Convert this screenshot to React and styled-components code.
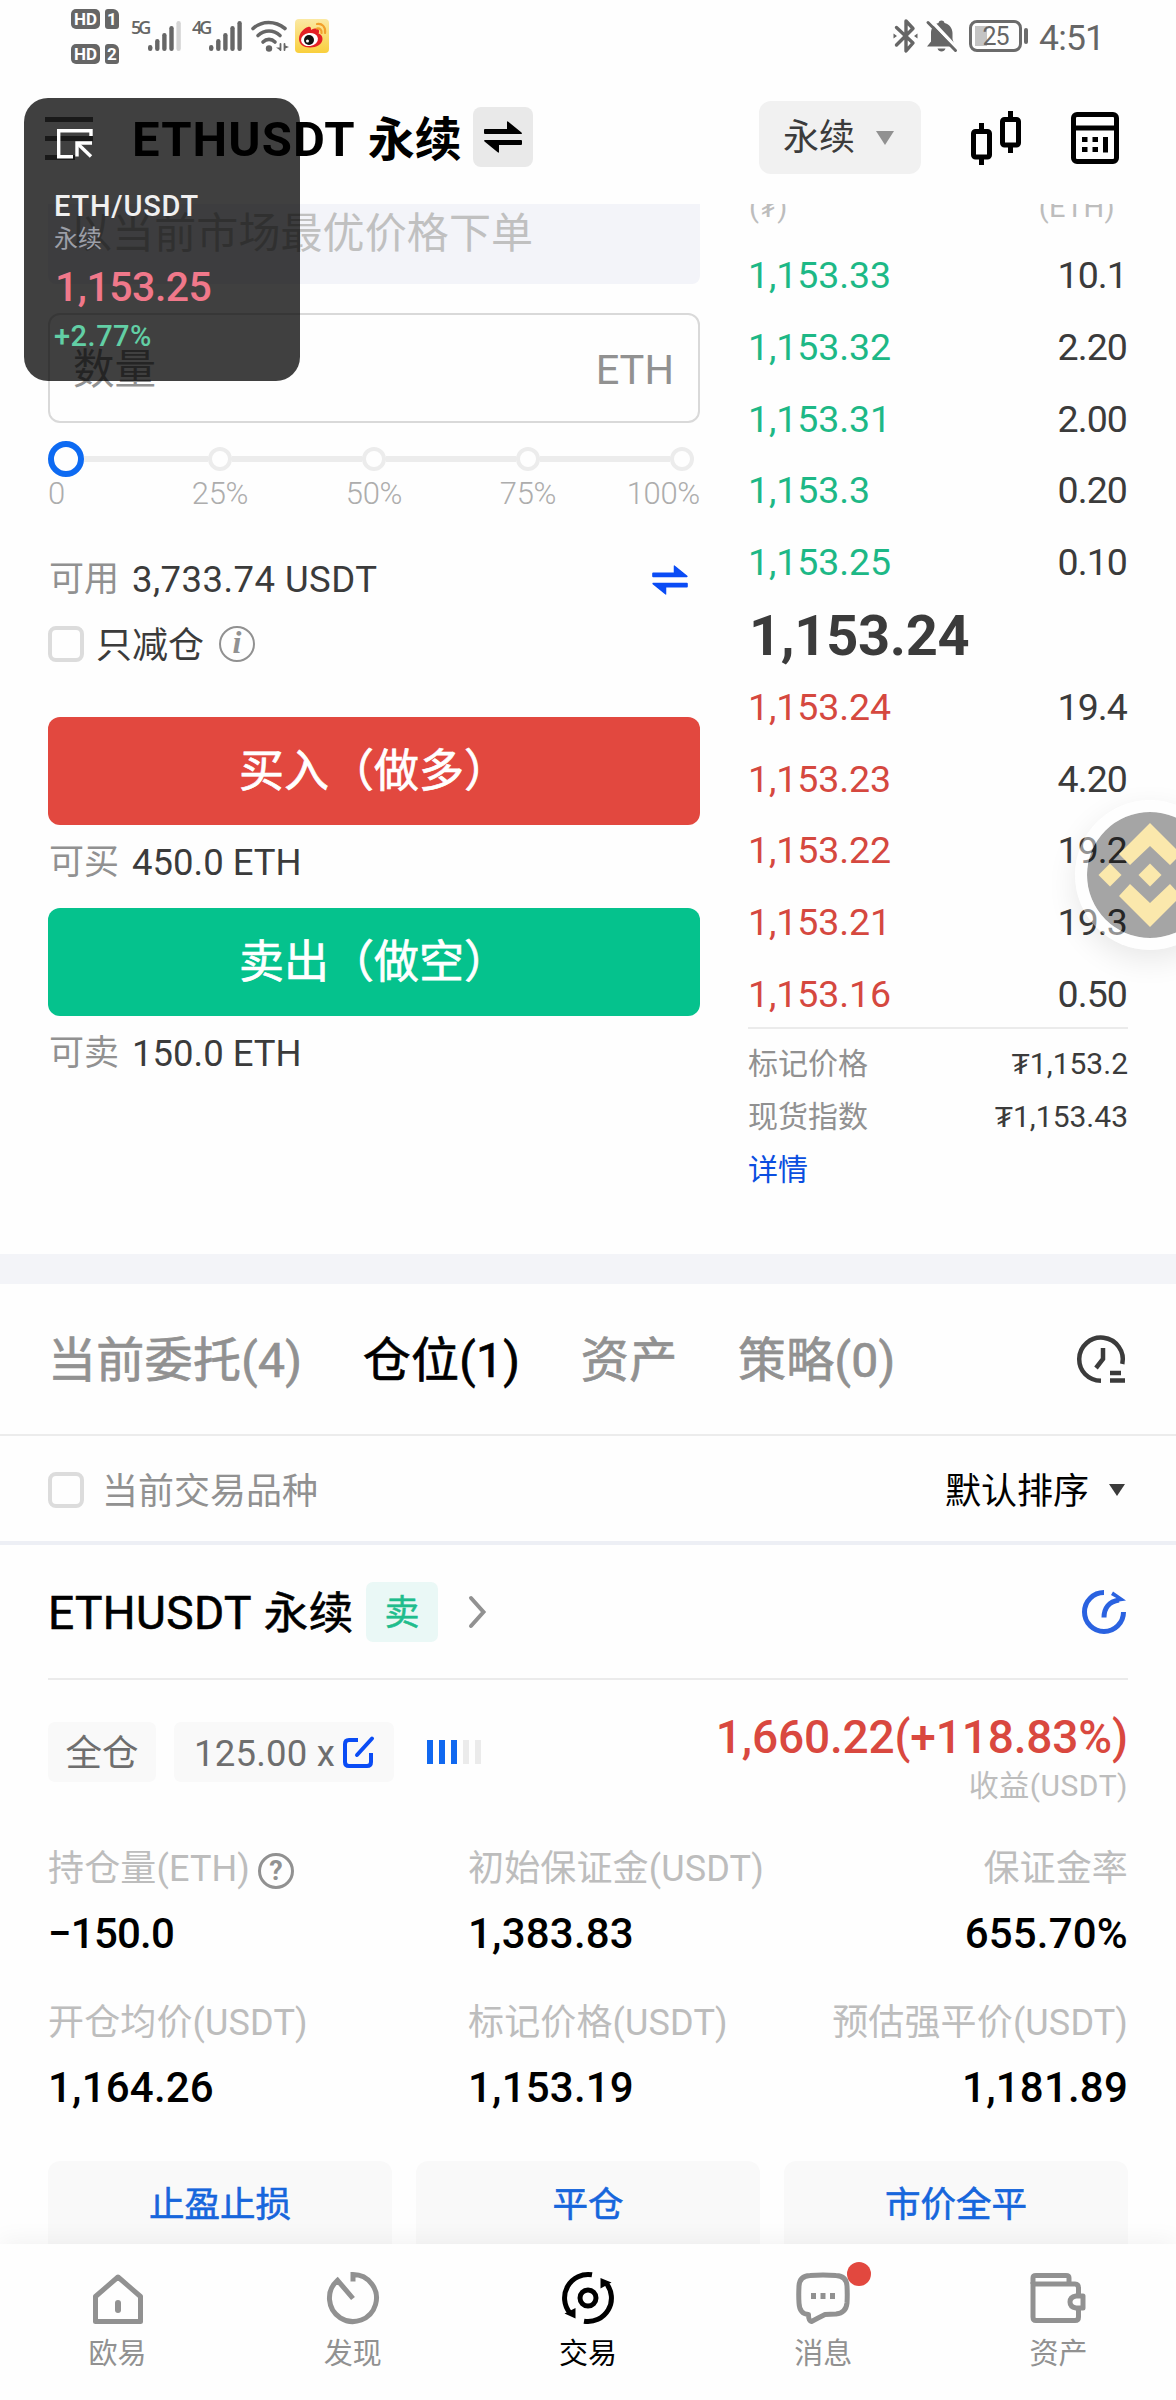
import styled, { createGlobalStyle } from 'styled-components';

const GlobalStyle = createGlobalStyle`
  * {
    box-sizing: border-box;
  }

  body {
    margin: 0;
    background: #fefefe;
    font-family: Roboto, "Noto Sans CJK SC", sans-serif;
    color: #3b3b3b;
  }

  svg {
    display: block;
    flex-shrink: 0;
    overflow: visible;
  }
`;

const Screen = styled.div`
  position: relative;
  width: 1176px;
  height: 2400px;
  overflow: hidden;
  display: flex;
  flex-direction: column;
`;

const StatusBar = styled.div`
  height: 84px;
  flex-shrink: 0;
  display: flex;
  justify-content: space-between;
  padding: 0 73px 0 71px;
`;

const StatusGroup = styled.div`
  display: flex;
  align-items: flex-start;
`;

const HdStack = styled.div`
  display: flex;
  flex-direction: column;
  gap: 15px;
  padding-top: 9px;
`;

const HdRow = styled.div`
  display: flex;
  gap: 5px;
`;

const Badge = styled.span`
  width: ${(props) => props.$w}px;
  height: 20px;
  border-radius: ${(props) => (props.$sim ? '3px 6px 3px 3px' : '5px')};
  background: #666;
  color: #fff;
  font-size: 17px;
  font-weight: 700;
  line-height: 20px;
  text-align: center;
`;

const Signal = styled.div`
  display: flex;
  margin-left: ${(props) => props.$left}px;
  padding-top: 21px;
`;

const NetLabel = styled.span`
  width: 17px;
  font-family: "Open Sans", sans-serif;
  font-size: 18px;
  font-weight: 600;
  line-height: 13px;
  letter-spacing: -3px;
  color: #666;
`;

const StatusIcon = styled.div`
  margin: ${(props) => props.$m};
`;

const Clock = styled.span`
  margin: 18px 0 0 11px;
  width: 64px;
  font-size: 35.5px;
  font-weight: 400;
  line-height: 40px;
  letter-spacing: -0.8px;
  color: #666;
`;

const Battery = styled.div`
  width: 53px;
  height: 32px;
  margin: 20px 2px 0 12px;
  border: 3px solid #6b6b6b;
  border-radius: 8px;
  font-size: 25px;
  line-height: 27px;
  letter-spacing: -1px;
  text-align: center;
  color: #666;
  background: linear-gradient(#c4c4c4, #c4c4c4) 3px 3px / 12px 20px no-repeat;
`;

const BatteryTip = styled.div`
  width: 4px;
  height: 16px;
  margin-top: 28px;
  border-radius: 2px;
  background: #6b6b6b;
`;

const Header = styled.header`
  height: 120px;
  flex-shrink: 0;
  display: flex;
  padding: 0 57px 0 45px;
`;

const MenuIcon = styled.div`
  padding-top: 33px;
`;

const PageTitle = styled.h1`
  margin: 24px 0 0 39px;
  width: 341px;
  font-size: 49px;
  font-weight: 700;
  line-height: 64px;
  letter-spacing: 1.1px;
  white-space: nowrap;
  color: #000;

  span {
    font-size: 47px;
    letter-spacing: 0;
  }
`;

const SwapButton = styled.button`
  width: 60px;
  height: 60px;
  margin: 23px 0 0 0;
  padding: 0;
  border: none;
  border-radius: 8px;
  background: #e9e9e9;
  display: flex;
  align-items: center;
  justify-content: center;
`;

const TypeSelect = styled.div`
  width: 162px;
  height: 73px;
  margin: 17px 0 0 auto;
  padding: 0 27px 0 24px;
  border-radius: 12px;
  background: #f1f1f1;
  display: flex;
  align-items: center;
  justify-content: space-between;
  font-size: 36px;
  line-height: 78px;
`;

const HeaderIcon = styled.div`
  margin: ${(props) => props.$m};
`;

const Trade = styled.section`
  height: 1050px;
  flex-shrink: 0;
  display: flex;
  justify-content: space-between;
  padding: 0 48px;
`;

const OrderForm = styled.div`
  width: 652px;
  display: flex;
  flex-direction: column;
`;

const MarketHint = styled.div`
  height: 80px;
  padding-left: 22px;
  border-radius: 0 0 8px 8px;
  background: #f3f4f9;
  color: #c0c0c0;
  font-size: 42px;
  line-height: 59px;
  letter-spacing: 0.1px;
`;

const AmountInput = styled.div`
  height: 110px;
  margin-top: 29px;
  padding: 0 24px 0 23px;
  border: 2px solid #d9d9d9;
  border-radius: 12px;
  display: flex;
  justify-content: space-between;
  font-size: 41.5px;
  line-height: 110px;
  color: #919191;
`;

const Slider = styled.div`
  height: 36px;
  margin-top: 18px;
  padding-right: 6px;
  display: flex;
  align-items: center;
`;

const Thumb = styled.div`
  width: 36px;
  height: 36px;
  border: 6px solid #0d6af2;
  border-radius: 50%;
`;

const Track = styled.div`
  flex: ${(props) => props.$grow};
  height: 6px;
  background: #ececec;
`;

const Stop = styled.div`
  width: 24px;
  height: 24px;
  border: 4px solid #ececec;
  border-radius: 50%;
`;

const SliderLabels = styled.div`
  height: 36px;
  display: grid;
  grid-template-columns: 95px 154px 154px 154px 95px;
  font-size: 31px;
  font-weight: 300;
  line-height: 34px;
  letter-spacing: -0.3px;
  color: #adadad;

  span {
    text-align: center;
  }

  span:first-child {
    text-align: left;
  }

  span:last-child {
    text-align: right;
  }
`;

const InfoRow = styled.div`
  height: ${(props) => props.$h}px;
  margin-top: ${(props) => props.$top || 0}px;
  padding-right: 12px;
  display: flex;
  align-items: center;
  font-size: 36.5px;
  line-height: 42px;
  letter-spacing: ${(props) => props.$ls || 0}px;
  color: #3b3b3b;
`;

const Muted = styled.span`
  width: 84px;
  padding-left: 1px;
  color: #919191;
  font-size: 35px;
  letter-spacing: 0;
`;

const Push = styled.div`
  margin-left: auto;
`;

const Checkbox = styled.span`
  width: 36px;
  height: 36px;
  border: 4px solid #dcdcdc;
  border-radius: 8px;
  flex-shrink: 0;
`;

const CheckLabel = styled.span`
  margin: 4px 15px 0 12px;
  font-size: 36px;
`;

const InfoCircle = styled.span`
  width: 36px;
  height: 36px;
  border: 2.5px solid #919191;
  border-radius: 50%;
  color: #919191;
  font-family: "Liberation Serif", serif;
  font-size: 32px;
  font-style: italic;
  font-weight: 700;
  line-height: 29px;
  text-align: center;
`;

const ActionButton = styled.button`
  height: 108px;
  margin-top: ${(props) => props.$top}px;
  padding: 1px 0 0;
  border: none;
  border-radius: 12px;
  background: ${(props) => (props.$side === 'buy' ? '#e2483f' : '#05c28d')};
  color: #fff;
  font-family: inherit;
  font-size: 45px;
  line-height: 108px;
  -webkit-text-stroke: 0.7px #fff;
`;

const Book = styled.div`
  width: 380px;
  display: flex;
  flex-direction: column;
`;

const BookHead = styled.div`
  height: 35px;
  overflow: hidden;
  display: flex;
  justify-content: space-between;
  padding: 0 13px 0 1px;
  font-size: 29px;
  line-height: 7px;
  letter-spacing: 0.3px;
  color: #bdbdbd;
`;

const BookRow = styled.div`
  height: 71.75px;
  display: flex;
  justify-content: space-between;
  font-size: 37.5px;
  line-height: 72px;
`;

const Price = styled.span`
  letter-spacing: -0.1px;
  color: ${(props) => (props.$side === 'up' ? '#1db886' : '#d5483f')};
`;

const Amount = styled.span`
  margin-right: 1px;
  letter-spacing: -0.9px;
`;

const LastPrice = styled.div`
  height: 73px;
  padding-left: 1px;
  font-size: 56px;
  font-weight: 700;
  line-height: 76px;
  letter-spacing: -0.3px;
`;

const BookFoot = styled.div`
  margin-top: -3px;
  padding-top: 8px;
  border-top: 2px solid #ebebeb;
`;

const FootRow = styled.div`
  height: 53px;
  display: flex;
  justify-content: space-between;
  font-size: 30px;
  line-height: 53px;

  span:first-child {
    color: ${(props) => (props.$link ? '#0a4ee0' : '#919191')};
  }
`;

const Band = styled.div`
  height: 30px;
  flex-shrink: 0;
  background: #f3f4f8;
`;

const Tabs = styled.nav`
  height: 152px;
  flex-shrink: 0;
  padding: 0 51px 0 48px;
  border-bottom: 2px solid #ececec;
  display: flex;
  align-items: center;
  gap: 60.5px;
`;

const Tab = styled.span`
  padding-top: 3px;
  font-size: 48px;
  line-height: 60px;
  letter-spacing: 0.3px;
  color: ${(props) => (props.$active ? '#000' : '#919191')};
  -webkit-text-stroke: 0.7px ${(props) => (props.$active ? '#000' : '#919191')};
`;

const Filter = styled.div`
  height: 109px;
  flex-shrink: 0;
  padding: 3px 51px 0 48px;
  border-bottom: 4px solid #edeff5;
  display: flex;
  align-items: center;
  font-size: 36px;
  line-height: 50px;
`;

const FilterLabel = styled.span`
  margin-left: 18px;
  padding-top: 4px;
  color: #919191;
`;

const Sort = styled.div`
  margin-left: auto;
  display: flex;
  align-items: center;
  gap: 20px;
  color: #000;

  span {
    padding-top: 4px;
  }
`;

const Position = styled.section`
  height: 699px;
  flex-shrink: 0;
  overflow: hidden;
  padding: 0 48px;
`;

const PositionHead = styled.div`
  height: 135px;
  padding-right: 2px;
  border-bottom: 2px solid #ebebeb;
  display: flex;
  align-items: center;
`;

const PositionTitle = styled.h2`
  width: 318px;
  margin: 0;
  padding-top: 3px;
  font-size: 46px;
  font-weight: 400;
  line-height: 60px;
  letter-spacing: 0.4px;
  white-space: nowrap;
  color: #000;
  -webkit-text-stroke: 0.6px #000;

  span {
    margin-left: 1px;
    font-size: 44.5px;
  }
`;

const SideTag = styled.span`
  width: 72px;
  height: 60px;
  margin-right: 31px;
  border-radius: 7px;
  background: #eaf8f6;
  color: #1fbd8d;
  font-size: 35px;
  line-height: 63px;
  text-align: center;
  -webkit-text-stroke: 0.5px #1fbd8d;
`;

const Summary = styled.div`
  height: 155px;
  padding-top: 42px;
  display: flex;
  align-items: flex-start;
`;

const Chip = styled.div`
  width: ${(props) => props.$w}px;
  height: 60px;
  margin-right: 18px;
  border-radius: 7px;
  background: #f9f9f9;
  display: flex;
  align-items: center;
  justify-content: center;
  gap: 8px;
  font-size: 36.5px;
  line-height: 60px;
  letter-spacing: ${(props) => props.$ls || 0}px;
  color: #6e6e6e;

  span {
    padding-top: 3px;
  }
`;

const RiskBars = styled.div`
  display: flex;
  gap: 6px;
  margin: 18px 0 0 15px;
`;

const RiskBar = styled.div`
  width: 6px;
  height: 24px;
  background: ${(props) => (props.$on ? '#1068f0' : '#ebebeb')};
`;

const Pnl = styled.div`
  margin: -10px 0 0 auto;
  text-align: right;
`;

const PnlValue = styled.div`
  font-size: 46px;
  font-weight: 500;
  line-height: 50px;
  letter-spacing: -0.15px;
  color: #d9483f;
`;

const PnlLabel = styled.div`
  margin-top: 4px;
  font-size: 30px;
  line-height: 40px;
  letter-spacing: 0.5px;
  color: #bdbdbd;
`;

const Stats = styled.div`
  display: grid;
  grid-template-columns: 420px 1fr auto;
  grid-auto-rows: 154px;
`;

const Stat = styled.div`
  text-align: ${(props) => props.$align || 'left'};
`;

const StatLabel = styled.div`
  height: 66px;
  display: flex;
  align-items: center;
  justify-content: ${(props) => (props.$align === 'right' ? 'flex-end' : 'flex-start')};
  gap: 8px;
  font-size: 36px;
  line-height: 66px;
  letter-spacing: 0.15px;
  white-space: nowrap;
  color: #bdbdbd;

  > span:first-child {
    padding-top: 2px;
  }
`;

const HelpCircle = styled.span`
  width: 36px;
  height: 36px;
  margin-top: 6px;
  border: 3px solid #919191;
  border-radius: 50%;
  color: #919191;
  font-size: 27px;
  font-weight: 700;
  line-height: 31px;
  text-align: center;
`;

const StatValue = styled.div`
  padding-top: 1px;
  font-size: 42px;
  font-weight: 500;
  line-height: 64px;
  letter-spacing: ${(props) => (props.$tight ? -0.8 : 0.2)}px;
  color: #000;
`;

const PositionActions = styled.div`
  margin-top: 18px;
  display: grid;
  grid-template-columns: repeat(3, 1fr);
  gap: 24px;
`;

const PositionAction = styled.button`
  height: 96px;
  padding: 0 0 8px;
  border: none;
  border-radius: 12px;
  background: #f9f9f9;
  color: #1766dc;
  font-family: inherit;
  font-size: 35.5px;
  line-height: 84px;
  -webkit-text-stroke: 0.6px #1766dc;
`;

const BottomNav = styled.nav`
  position: relative;
  height: 156px;
  flex-shrink: 0;
  display: grid;
  grid-template-columns: repeat(5, 1fr);
  background: #fefefe;
  box-shadow: 0 -4px 22px rgba(0, 0, 0, 0.05);
`;

const NavItem = styled.div`
  display: flex;
  flex-direction: column;
  align-items: center;
  padding-top: 28px;
  color: ${(props) => (props.$active ? '#000' : '#919191')};
  font-size: 29px;
  line-height: 40px;
`;

const NavIcon = styled.div`
  position: relative;
  height: 62px;
`;

const Dot = styled.span`
  position: absolute;
  top: -10px;
  right: -21px;
  width: 24px;
  height: 24px;
  border-radius: 50%;
  background: #e2483f;
`;

const FloatCard = styled.aside`
  position: absolute;
  left: 24px;
  top: 98px;
  width: 276px;
  height: 283px;
  padding: 31px 0 0 30px;
  border-radius: 24px;
  background: rgba(0, 0, 0, 0.75);
`;

const FloatPair = styled.div`
  margin-top: 31px;
  font-size: 29px;
  font-weight: 500;
  line-height: 32px;
  letter-spacing: 0.8px;
  color: #f0f0f0;
`;

const FloatType = styled.div`
  font-size: 24px;
  line-height: 34px;
  color: #9c9fa8;
`;

const FloatPrice = styled.div`
  margin-top: 6px;
  padding-left: 1px;
  font-size: 41px;
  font-weight: 500;
  line-height: 50px;
  letter-spacing: -0.5px;
  color: #f0788a;
`;

const FloatChange = styled.div`
  margin-top: 6px;
  font-size: 29px;
  font-weight: 500;
  line-height: 36px;
  letter-spacing: 0.5px;
  color: #62cfa5;
`;

const FloatBall = styled.div`
  position: absolute;
  left: 1075px;
  top: 800px;
  width: 150px;
  height: 150px;
  border: 12px solid rgba(255, 255, 255, 0.45);
  border-radius: 50%;
  background: rgba(0, 0, 0, 0.35) padding-box;
  box-shadow: 0 10px 30px rgba(0, 0, 0, 0.09);
`;

const bids = [
  ['1,153.33', '10.1'],
  ['1,153.32', '2.20'],
  ['1,153.31', '2.00'],
  ['1,153.3', '0.20'],
  ['1,153.25', '0.10'],
];

const asks = [
  ['1,153.24', '19.4'],
  ['1,153.23', '4.20'],
  ['1,153.22', '19.2'],
  ['1,153.21', '19.3'],
  ['1,153.16', '0.50'],
];

const stats = [
  { label: '持仓量(ETH)', value: '−150.0', help: true },
  { label: '初始保证金(USDT)', value: '1,383.83' },
  { label: '保证金率', value: '655.70%', align: 'right' },
  { label: '开仓均价(USDT)', value: '1,164.26' },
  { label: '标记价格(USDT)', value: '1,153.19' },
  { label: '预估强平价(USDT)', value: '1,181.89', align: 'right' },
];

const SignalBars = ({ level }) => (
  <svg width="34" height="30" viewBox="0 0 34 30">
    {[6, 12, 18, 25, 30].map((h, i) => (
      <rect key={h} x={i * 7.1} y={30 - h} width="4.4" height={h} rx="2.2" fill={i < level ? '#666' : '#d4d4d4'} />
    ))}
  </svg>
);

const WifiIcon = () => (
  <svg width="38" height="31" viewBox="0 0 38 31" fill="none" stroke="#666" strokeWidth="3.6" strokeLinecap="round">
    <path d="M2 7.5C11 -0.5 24 -0.5 34 7.5" />
    <path d="M7 14.5C13.500 8.500 22.500 8.500 29 14.500" />
    <path d="M12 21C15.500 17.500 20.500 17.500 24 21" />
    <circle cx="18" cy="27.500" r="3.200" fill="#666" stroke="none" />
    <path d="M30 22v8l-5-3.500h5zM33 22v8M33 24l5 2-5 2z" fill="#666" stroke="none" />
    <path d="M29.500 23v6M33.500 23v6" strokeWidth="1.800" />
  </svg>
);

const WeiboIcon = () => (
  <svg width="34" height="34" viewBox="0 0 34 34">
    <defs>
      <linearGradient id="weibo" x1="0" y1="0" x2="0" y2="1">
        <stop offset="0" stopColor="#fbe9a4" />
        <stop offset="1" stopColor="#f9cf3c" />
      </linearGradient>
    </defs>
    <rect width="34" height="34" rx="4" fill="url(#weibo)" />
    <path d="M4 20C4 14 9 9 13 8c3-.6 3 1 3 3 4-2 8-2 8 1 0 1 0 2-.5 2.500C26 15.500 27.500 17 27.500 20c0 5-6 8.500-12.500 8.500S4 25 4 20z" fill="#e31f25" />
    <ellipse cx="14.500" cy="20.500" rx="8.500" ry="6.500" fill="#fff" transform="rotate(-8 14.500 20.500)" />
    <circle cx="14" cy="21" r="5" fill="#111" />
    <circle cx="12.500" cy="22" r="1.500" fill="#fff" />
    <path d="M22 5c5-1 9 3 8 9M22 9.500c3-.5 5 1.500 4.500 4.500" fill="none" stroke="#f2a02c" strokeWidth="2.200" strokeLinecap="round" />
  </svg>
);

const BluetoothIcon = () => (
  <svg width="25" height="34" viewBox="0 0 25 34" fill="none" stroke="#666" strokeWidth="3.400" strokeLinejoin="round" strokeLinecap="round">
    <path d="M3.500 8.500L20 24l-7 8V2l7 7.500L3.500 26" />
    <path d="M0.500 14.500v5l3.500-2.500zM24.500 14.500v5L21 17z" fill="#666" stroke="none" />
  </svg>
);

const BellOffIcon = () => (
  <svg width="30" height="32" viewBox="0 0 30 32">
    <path d="M4 25.500V13C4 8 7 4 11.500 3 12 1.200 13 .5 14.500 .5S17 1.200 17.500 3C22 4 25.500 8 25.500 13v6l2 6.500zM0 26.500l4-5h18l4 5z" fill="#666" />
    <path d="M10.500 28.500h8c-1 4-7 4-8 0z" fill="#666" />
    <path d="M4.500 1L32 30.500" stroke="#fefefe" strokeWidth="3.500" />
    <path d="M1 2.500L28.500 30.500" stroke="#666" strokeWidth="3" strokeLinecap="round" />
  </svg>
);

const SwapIcon = ({ color = '#000', width = 38, height = 32 }) => (
  <svg width={width} height={height} viewBox="0 0 38 32" fill={color}>
    <path d="M1 8H23V1.200q0-1.500 1.300-.5L37.500 11.500q1 1.500-.5 1.500H1q-1 0-1-1V9q0-1 1-1z" />
    <path d="M37 24H15v6.800q0 1.500-1.300 .5L.5 20.500q-1-1.500 .5-1.500H37q1 0 1 1v3q0 1-1 1z" />
  </svg>
);

const CandlesIcon = () => (
  <svg width="50" height="54" viewBox="0 0 50 54" fill="none" stroke="#000" strokeWidth="5">
    <rect x="2.500" y="20.500" width="16" height="25.500" rx="2" />
    <rect x="31.500" y="8.500" width="16" height="25.500" rx="2" />
    <path d="M10.500 12v8M10.500 46v8M39.500 0v8M39.500 34v8" />
  </svg>
);

const CalculatorIcon = () => (
  <svg width="48" height="52" viewBox="0 0 48 52" fill="none" stroke="#000" strokeWidth="5">
    <rect x="2.500" y="2.500" width="43" height="47" rx="3.500" />
    <path d="M2 16H46" />
    <path d="M11 27.500h5.500M21.500 27.500H27M11 37.500h5.500M21.500 37.500H27M34.500 25v15.500" />
  </svg>
);

const HistoryIcon = () => (
  <svg width="48" height="48" viewBox="0 0 48 48" fill="none" stroke="#3b3b3b" strokeWidth="4.500">
    <path d="M24 45.800C11 45.500 2.200 36 2.200 24A21.800 21.800 0 1 1 45.300 29" />
    <path d="M26 13V24L19 33" />
    <path d="M33 38h11M33 45.500H48" />
  </svg>
);

const ShareIcon = () => (
  <svg width="44" height="44" viewBox="0 0 44 44" fill="none" stroke="#2a62e0" strokeWidth="5">
    <path d="M22 2.500A19.500 19.500 0 1 0 41.500 22" />
    <path d="M22 27.500C22 18 27 11.500 37 10" />
    <path d="M31 1.500L44 10.500 30 12.500 36 9 29 5z" fill="#2a62e0" stroke="none" />
  </svg>
);

const EditIcon = () => (
  <svg width="31" height="31" viewBox="0 0 31 31" fill="none" stroke="#0a4cf5" strokeWidth="4">
    <path d="M15 3H6Q2 3 2 7V25Q2 29 6 29H24Q28 29 28 25V16" />
    <path d="M14 18L29 1.500" strokeLinecap="round" />
  </svg>
);

const PopOutIcon = () => (
  <svg width="38" height="30" viewBox="0 0 38 30" fill="none" stroke="#fff" strokeWidth="3.400">
    <path d="M37 7V1.700H4.700V27.700H19" />
    <path d="M23 27.500V14H38" />
    <path d="M24 15L37 27.500" />
  </svg>
);

const HomeIcon = () => (
  <svg width="50" height="52" viewBox="0 0 50 52" fill="none" stroke="currentColor" strokeWidth="5" strokeLinejoin="round">
    <path d="M25 5L47.500 24.500V49.500H2.500V24.500z" />
    <path d="M25 31v7" strokeWidth="6" strokeLinecap="round" />
  </svg>
);

const DiscoverIcon = () => (
  <svg width="52" height="52" viewBox="0 0 52 52" fill="none" stroke="currentColor" strokeWidth="5">
    <path d="M26 9.500V2.500A23.500 23.500 0 1 1 10.500 8.300L26 26.500" />
  </svg>
);

const TradeIcon = () => (
  <svg width="52" height="52" viewBox="0 0 52 52" fill="none" stroke="currentColor" strokeWidth="5">
    <path d="M30 2.800A23.500 23.500 0 0 0 8 41" />
    <path d="M22 49.200A23.500 23.500 0 0 0 44 11" />
    <path d="M2.500 41.500L13.500 36V46.500zM49.500 10.500L38.500 6V16.500z" fill="currentColor" stroke="none" />
    <circle cx="26" cy="26" r="8" />
  </svg>
);

const MessageIcon = () => (
  <svg width="54" height="52" viewBox="0 0 54 52" fill="none" stroke="currentColor" strokeWidth="5" strokeLinejoin="round">
    <path d="M14 3.500Q27 2.500 40 3.500Q50.500 4 51 14Q51.500 23 51 31Q50 41 40 42Q34 42 29 42.500Q22 46 15.500 49.500Q12.500 49 12.500 42.500Q3.500 42 3 31Q2.500 23 3 14Q3.500 4 14 3.500z" />
    <path d="M17.500 21v6M27 21v6M36.500 21v6" />
  </svg>
);

const WalletIcon = () => (
  <svg width="56" height="52" viewBox="0 0 56 52" fill="none" stroke="currentColor" strokeWidth="5" strokeLinejoin="round">
    <path d="M3 12V6Q3 3.500 6 3.500H36Q39 3.500 39 6V12" />
    <path d="M3 12H45Q48.500 12 48.500 16V24M48.500 36V45Q48.500 48.500 45 48.500H6Q3 48.500 3 45V10" />
    <path d="M53 24V36H46Q40 35 40 30Q40 25 46 24z" />
  </svg>
);

const CoinMark = () => (
  <svg width="126" height="126" viewBox="0 0 126 126" fill="#fbe8ac">
    <path d="M63 11L94 42 83 53 63 34 43 53 32 42z" />
    <path d="M63 115L94 84 83 72 63 91 43 72 32 84z" />
    <path d="M63 51.500L74.500 63 63 74.500 51.500 63z" />
    <path d="M23 51.500L34.500 63 23 74.500 11.500 63z" />
    <path d="M103 51.500L114.500 63 103 74.500 91.500 63z" />
  </svg>
);

const navItems = [
  { label: '欧易', icon: <HomeIcon /> },
  { label: '发现', icon: <DiscoverIcon /> },
  { label: '交易', icon: <TradeIcon />, active: true },
  { label: '消息', icon: <MessageIcon />, dot: true },
  { label: '资产', icon: <WalletIcon /> },
];

const App = () => {
  return (
    <Screen>
      <GlobalStyle />

      <StatusBar>
        <StatusGroup>
          <HdStack>
            <HdRow>
              <Badge $w={29}>HD</Badge>
              <Badge $w={14} $sim>1</Badge>
            </HdRow>
            <HdRow>
              <Badge $w={29}>HD</Badge>
              <Badge $w={14} $sim>2</Badge>
            </HdRow>
          </HdStack>
          <Signal $left={12}>
            <NetLabel>5G</NetLabel>
            <SignalBars level={4} />
          </Signal>
          <Signal $left={10}>
            <NetLabel>4G</NetLabel>
            <SignalBars level={5} />
          </Signal>
          <StatusIcon $m="21px 0 0 8px">
            <WifiIcon />
          </StatusIcon>
          <StatusIcon $m="19px 0 0 6px">
            <WeiboIcon />
          </StatusIcon>
        </StatusGroup>
        <StatusGroup>
          <StatusIcon $m="19px 9px 0 0">
            <BluetoothIcon />
          </StatusIcon>
          <StatusIcon $m="20px 0 0 0">
            <BellOffIcon />
          </StatusIcon>
          <Battery>25</Battery>
          <BatteryTip />
          <Clock>4:51</Clock>
        </StatusGroup>
      </StatusBar>

      <Header>
        <MenuIcon>
          <svg width="48" height="43" viewBox="0 0 48 43" stroke="#000" strokeWidth="5" opacity="0.6">
            <path d="M0 2.500H48M0 21.500H48M0 40.500H30" />
          </svg>
        </MenuIcon>
        <PageTitle>
          ETHUSDT <span>永续</span>
        </PageTitle>
        <SwapButton>
          <SwapIcon />
        </SwapButton>
        <TypeSelect>
          永续
          <svg width="18" height="14" viewBox="0 0 18 14">
            <path d="M0 0H18L9 14z" fill="#919191" />
          </svg>
        </TypeSelect>
        <HeaderIcon $m="27px 50px 0 50px">
          <CandlesIcon />
        </HeaderIcon>
        <HeaderIcon $m="28px 0 0 0">
          <CalculatorIcon />
        </HeaderIcon>
      </Header>

      <Trade>
        <OrderForm>
          <MarketHint>以当前市场最优价格下单</MarketHint>
          <AmountInput>
            <span>数量</span>
            <span>ETH</span>
          </AmountInput>
          <Slider>
            <Thumb />
            <Track $grow={124} />
            <Stop />
            <Track $grow={130} />
            <Stop />
            <Track $grow={130} />
            <Stop />
            <Track $grow={130} />
            <Stop />
          </Slider>
          <SliderLabels>
            <span>0</span>
            <span>25%</span>
            <span>50%</span>
            <span>75%</span>
            <span>100%</span>
          </SliderLabels>
          <InfoRow $h={50} $top={42} $ls={0.45}>
            <Muted>可用</Muted>
            3,733.74 USDT
            <Push>
              <SwapIcon color="#0a4cf5" width={36} height={30} />
            </Push>
          </InfoRow>
          <InfoRow $h={50} $top={14}>
            <Checkbox />
            <CheckLabel>只减仓</CheckLabel>
            <InfoCircle>i</InfoCircle>
          </InfoRow>
          <ActionButton $side="buy" $top={48}>买入（做多）</ActionButton>
          <InfoRow $h={50} $top={13}>
            <Muted>可买</Muted>
            450.0 ETH
          </InfoRow>
          <ActionButton $side="sell" $top={20}>卖出（做空）</ActionButton>
          <InfoRow $h={50} $top={13}>
            <Muted>可卖</Muted>
            150.0 ETH
          </InfoRow>
        </OrderForm>

        <Book>
          <BookHead>
            <span>(₮)</span>
            <span>(ETH)</span>
          </BookHead>
          {bids.map(([price, amount]) => (
            <BookRow key={price}>
              <Price $side="up">{price}</Price>
              <Amount>{amount}</Amount>
            </BookRow>
          ))}
          <LastPrice>1,153.24</LastPrice>
          {asks.map(([price, amount]) => (
            <BookRow key={price}>
              <Price $side="down">{price}</Price>
              <Amount>{amount}</Amount>
            </BookRow>
          ))}
          <BookFoot>
            <FootRow>
              <span>标记价格</span>
              <span>₮1,153.2</span>
            </FootRow>
            <FootRow>
              <span>现货指数</span>
              <span>₮1,153.43</span>
            </FootRow>
            <FootRow $link>
              <span>详情</span>
            </FootRow>
          </BookFoot>
        </Book>
      </Trade>

      <Band />

      <Tabs>
        <Tab>当前委托(4)</Tab>
        <Tab $active>仓位(1)</Tab>
        <Tab>资产</Tab>
        <Tab>策略(0)</Tab>
        <Push>
          <HistoryIcon />
        </Push>
      </Tabs>

      <Filter>
        <Checkbox />
        <FilterLabel>当前交易品种</FilterLabel>
        <Sort>
          <span>默认排序</span>
          <svg width="16" height="12" viewBox="0 0 16 12">
            <path d="M0 0H16L8 12z" fill="#3b3b3b" />
          </svg>
        </Sort>
      </Filter>

      <Position>
        <PositionHead>
          <PositionTitle>
            ETHUSDT <span>永续</span>
          </PositionTitle>
          <SideTag>卖</SideTag>
          <svg width="17" height="32" viewBox="0 0 17 32" fill="none" stroke="#919191" strokeWidth="4">
            <path d="M2 2L14.500 16 2 30" strokeLinecap="round" />
          </svg>
          <Push>
            <ShareIcon />
          </Push>
        </PositionHead>

        <Summary>
          <Chip $w={108}>
            <span>全仓</span>
          </Chip>
          <Chip $w={220} $ls={0.2}>
            <span>125.00 x</span>
            <EditIcon />
          </Chip>
          <RiskBars>
            {[1, 1, 1, 0, 0].map((on, i) => (
              <RiskBar key={i} $on={on} />
            ))}
          </RiskBars>
          <Pnl>
            <PnlValue>1,660.22(+118.83%)</PnlValue>
            <PnlLabel>收益(USDT)</PnlLabel>
          </Pnl>
        </Summary>

        <Stats>
          {stats.map((item) => (
            <Stat key={item.label} $align={item.align}>
              <StatLabel $align={item.align}>
                <span>{item.label}</span>
                {item.help && <HelpCircle>?</HelpCircle>}
              </StatLabel>
              <StatValue $tight={item.help}>{item.value}</StatValue>
            </Stat>
          ))}
        </Stats>

        <PositionActions>
          <PositionAction>止盈止损</PositionAction>
          <PositionAction>平仓</PositionAction>
          <PositionAction>市价全平</PositionAction>
        </PositionActions>
      </Position>

      <BottomNav>
        {navItems.map((item) => (
          <NavItem key={item.label} $active={item.active}>
            <NavIcon>
              {item.icon}
              {item.dot && <Dot />}
            </NavIcon>
            {item.label}
          </NavItem>
        ))}
      </BottomNav>

      <FloatBall>
        <CoinMark />
      </FloatBall>

      <FloatCard>
        <PopOutIcon />
        <FloatPair>ETH/USDT</FloatPair>
        <FloatType>永续</FloatType>
        <FloatPrice>1,153.25</FloatPrice>
        <FloatChange>+2.77%</FloatChange>
      </FloatCard>
    </Screen>
  );
};

export default App;
